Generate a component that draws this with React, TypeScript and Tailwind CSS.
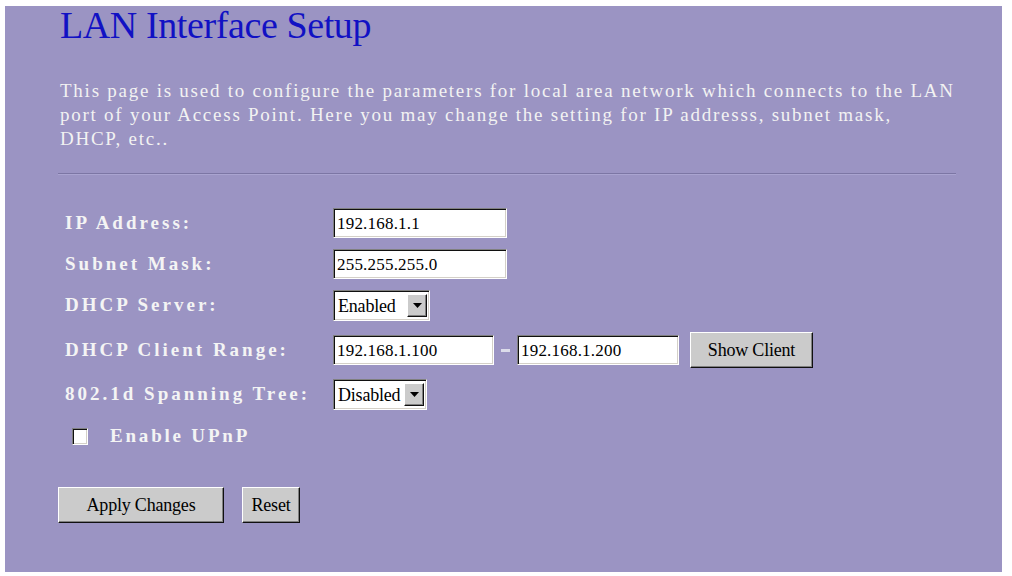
import React from 'react';

const serif = "font-['Liberation_Serif','Times_New_Roman',serif]";

const sunken =
  'bg-white border border-t-[#808080] border-l-[#808080] border-b-white border-r-white shadow-[inset_1px_1px_0_#101010,inset_-1px_-1px_0_#d4d0c8]';

const raised =
  'bg-[#cbcbcb] border border-t-white border-l-white border-b-[#101010] border-r-[#101010] shadow-[inset_-1px_-1px_0_#808080]';

type TextBoxProps = { value: string; width: string };

const TextBox = ({ value, width }: TextBoxProps) => (
  <div className={`${sunken} ${width} h-[30px] flex items-center pl-[3px]`}>
    <span className={`${serif} text-[17px] tracking-[0.2px] text-black leading-none`}>{value}</span>
  </div>
);

type DropProps = { value: string; width: string };

const Drop = ({ value, width }: DropProps) => (
  <div className={`${sunken} ${width} h-[31px] flex items-center pl-[4px] pr-[2px]`}>
    <span className={`${serif} flex-1 text-[18px] tracking-[-0.2px] text-black leading-none`}>{value}</span>
    <div className={`${raised} w-[20px] h-[23px] flex items-center justify-center`}>
      <svg width="9" height="5" viewBox="0 0 9 5">
        <path d="M0 0h9L4.5 5z" fill="#000" />
      </svg>
    </div>
  </div>
);

type ButtonProps = { label: string; width: string };

const WinButton = ({ label, width }: ButtonProps) => (
  <button className={`${raised} ${width} h-[36px] flex items-center justify-center`}>
    <span className={`${serif} text-[18px] tracking-[-0.2px] text-black leading-none`}>{label}</span>
  </button>
);

const Label = ({ children }: { children: React.ReactNode }) => (
  <div className={`${serif} w-[273px] pl-[5px] font-bold text-[19px] tracking-[3px] text-[#f4f4f4]`}>{children}</div>
);

export default function App() {
  return (
    <div className="w-[1012px] h-[576px] bg-white pt-[6px] pl-[5px] pr-[10px] pb-[4px]">
      <div className="h-full bg-[#9b94c3] pl-[55px] pr-[46px]">
        <h1 className={`${serif} text-[38px] leading-none pt-0 text-[#1111c4] tracking-[-0.4px]`}>
          LAN Interface Setup
        </h1>

        <p className={`${serif} mt-[35px] text-[19px] leading-[24px] tracking-[1.75px] text-[#f2f2f2] whitespace-nowrap`}>
          This page is used to configure the parameters for local area network which connects to the LAN
          <br />
          port of your Access Point. Here you may change the setting for IP addresss, subnet mask,
          <br />
          DHCP, etc..
        </p>

        <div className="mt-[22px] -ml-[2px] h-[2px] border-t border-t-[#7c76a4] border-b border-b-[#aaa4d0]" />

        <div className="mt-[33px] flex flex-col gap-[11px]">
          <div className="flex items-center">
            <Label>IP Address:</Label>
            <TextBox value="192.168.1.1" width="w-[174px]" />
          </div>
          <div className="flex items-center">
            <Label>Subnet Mask:</Label>
            <TextBox value="255.255.255.0" width="w-[174px]" />
          </div>
          <div className="flex items-center">
            <Label>DHCP Server:</Label>
            <Drop value="Enabled" width="w-[97px]" />
          </div>
          <div className="flex items-center">
            <Label>DHCP Client Range:</Label>
            <TextBox value="192.168.1.100" width="w-[161px]" />
            <div className="mx-[7px] w-[9px] h-[3px] bg-[#dcdcea]" />
            <TextBox value="192.168.1.200" width="w-[162px]" />
            <div className="ml-[11px]">
              <WinButton label="Show Client" width="w-[123px]" />
            </div>
          </div>
          <div className="flex items-center">
            <Label>802.1d Spanning Tree:</Label>
            <Drop value="Disabled" width="w-[94px]" />
          </div>
        </div>

        <div className="mt-[16px] h-[20px] flex items-center pl-[12px]">
          <div className={`${sunken} w-[16px] h-[17px]`} />
          <span className={`${serif} ml-[22px] font-bold text-[19px] tracking-[2.8px] text-[#f4f4f4]`}>Enable UPnP</span>
        </div>

        <div className="mt-[41px] -ml-[2px] flex items-center gap-[18px]">
          <WinButton label="Apply Changes" width="w-[166px]" />
          <WinButton label="Reset" width="w-[58px]" />
        </div>
      </div>
    </div>
  );
}
